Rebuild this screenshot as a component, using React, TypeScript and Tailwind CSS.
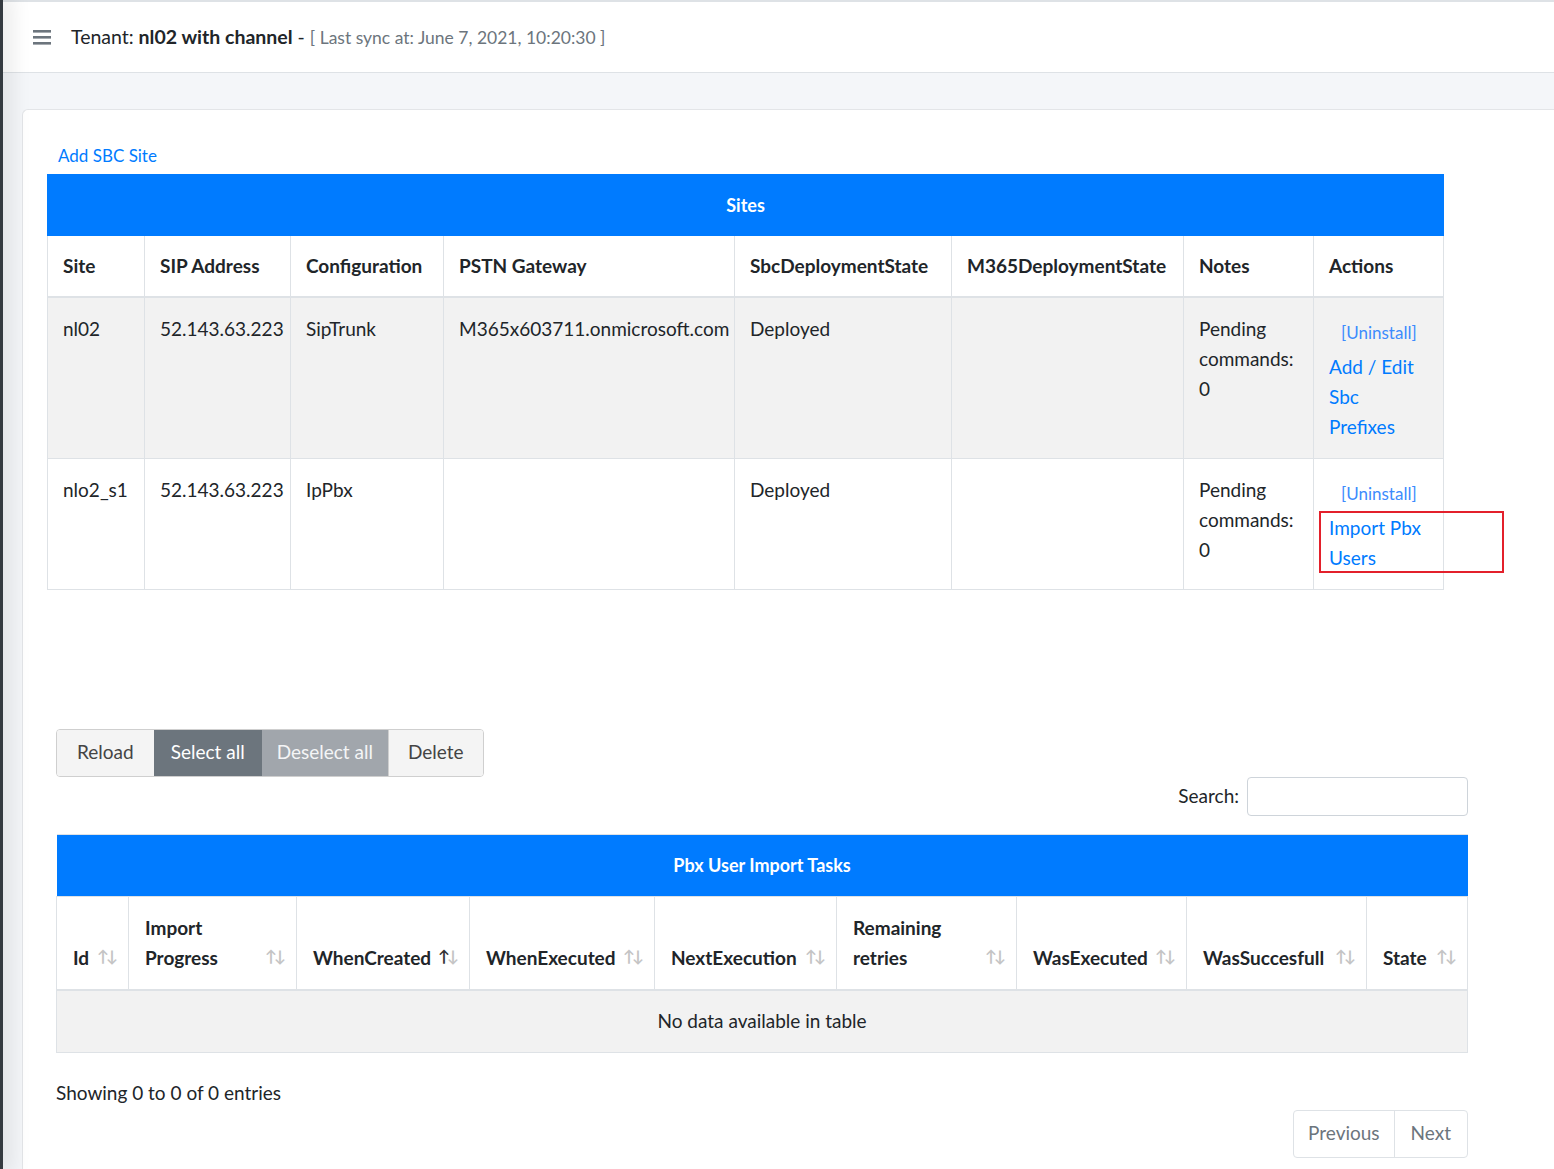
import React from 'react';

const font = { fontFamily: 'Lato, "Open Sans", sans-serif' };

const siteCols = [
    { label: 'Site', w: 97 },
    { label: 'SIP Address', w: 146 },
    { label: 'Configuration', w: 153 },
    { label: 'PSTN Gateway', w: 291 },
    { label: 'SbcDeploymentState', w: 217 },
    { label: 'M365DeploymentState', w: 232 },
    { label: 'Notes', w: 130 },
    { label: 'Actions', w: 130 },
];

const taskCols = [
    { label: 'Id', w: 72, wrap: false },
    { label: 'Import Progress', w: 168, wrap: true },
    { label: 'WhenCreated', w: 173, wrap: false, active: true },
    { label: 'WhenExecuted', w: 185, wrap: false },
    { label: 'NextExecution', w: 182, wrap: false },
    { label: 'Remaining retries', w: 180, wrap: true },
    { label: 'WasExecuted', w: 170, wrap: false },
    { label: 'WasSuccesfull', w: 180, wrap: false },
    { label: 'State', w: 101, wrap: false },
];

const SortArrows: React.FC<{ active?: boolean }> = ({ active }) => (
    <span className="absolute right-[10px] bottom-[25px] flex text-[16px] leading-none font-bold">
        <span className={active ? 'text-[#333]' : 'text-[#c4c4c4]'}>↑</span>
        <span className="text-[#c4c4c4] -ml-[3px]">↓</span>
    </span>
);

const Uninstall = () => (
    <div className="h-[38px] flex items-center pl-[12px]">
        <a className="text-[17px] text-[#3d8bfd] cursor-pointer">[Uninstall]</a>
    </div>
);

const td = 'px-[15px] py-[16px] border border-[#dee2e6]';

export default function App() {
    return (
        <div className="flex min-h-[1169px] bg-white text-[#212529]" style={font}>
            <div className="w-[3px] bg-[#343a40] shadow-[0_0_22px_6px_rgba(0,0,0,0.12)] z-10" />

            <div className="flex-1 flex flex-col min-w-0">
                <header className="h-[73px] border-t-2 border-b border-[#dee2e6] bg-white flex items-center pl-[30px]">
                    <svg width="18" height="16" viewBox="0 0 18 16" className="mr-[20px]">
                        <rect x="0" y="1" width="18" height="2.6" fill="#6c757d" />
                        <rect x="0" y="7" width="18" height="2.6" fill="#6c757d" />
                        <rect x="0" y="13" width="18" height="2.6" fill="#6c757d" />
                    </svg>
                    <span className="text-[19.5px]">
                        Tenant: <b className="font-bold">nl02 with channel</b> -{' '}
                        <span className="text-[17.5px] text-[#6c757d]">[ Last sync at: June 7, 2021, 10:20:30 ]</span>
                    </span>
                </header>

                <main className="flex-1 bg-[#f4f6f9] pt-[36px] pl-[19px]">
                    <div className="bg-white border-t border-l border-[#e3e5e8] rounded-tl-[6px] h-full pl-[24px] pt-[34px] pb-[10px]">
                        <a className="block text-[17px] text-[#007bff] ml-[11px] mb-[6px] leading-[24px]">Add SBC Site</a>

                        <table className="border-collapse text-[19px] w-[1396px] table-fixed">
                            <colgroup>
                                {siteCols.map(c => (
                                    <col key={c.label} style={{ width: c.w }} />
                                ))}
                            </colgroup>
                            <thead>
                                <tr>
                                    <th colSpan={8} className="bg-[#007bff] text-white font-bold text-[18px] h-[61px] border border-[#007bff]">
                                        Sites
                                    </th>
                                </tr>
                                <tr>
                                    {siteCols.map(c => (
                                        <th
                                            key={c.label}
                                            className="h-[61px] text-left font-bold px-[15px] border border-[#dee2e6] border-b-2 whitespace-nowrap"
                                        >
                                            {c.label}
                                        </th>
                                    ))}
                                </tr>
                            </thead>
                            <tbody className="leading-[30px]">
                                <tr className="bg-[#f2f2f2] align-top">
                                    <td className={td}>nl02</td>
                                    <td className={td}>52.143.63.223</td>
                                    <td className={td}>SipTrunk</td>
                                    <td className={`${td} whitespace-nowrap`}>M365x603711.onmicrosoft.com</td>
                                    <td className={td}>Deployed</td>
                                    <td className={td}></td>
                                    <td className={td}>Pending commands: 0</td>
                                    <td className={td}>
                                        <Uninstall />
                                        <a className="text-[#007bff] block">Add / Edit Sbc Prefixes</a>
                                    </td>
                                </tr>
                                <tr className="bg-white align-top">
                                    <td className={td}>nlo2_s1</td>
                                    <td className={td}>52.143.63.223</td>
                                    <td className={td}>IpPbx</td>
                                    <td className={td}></td>
                                    <td className={td}>Deployed</td>
                                    <td className={td}></td>
                                    <td className={td}>Pending commands: 0</td>
                                    <td className={td}>
                                        <Uninstall />
                                        <span className="relative block">
                                            <a className="text-[#007bff] block">Import Pbx Users</a>
                                            <span className="absolute -left-[10px] -top-[2px] w-[185px] h-[62px] border-2 border-[#e3202b]" />
                                        </span>
                                    </td>
                                </tr>
                            </tbody>
                        </table>

                        <section className="pl-[9px] pr-[63px] mt-[139px] w-[1484px]">
                            <div className="inline-flex text-[19px] h-[48px] rounded-[4px] overflow-hidden border border-[#cfcfcf]">
                                <button className="px-[20px] bg-[#f4f4f4] text-[#444]">Reload</button>
                                <button className="px-[17px] bg-[#6c757d] text-white">Select all</button>
                                <button className="px-[15px] bg-[#a1a6ac] text-[#f4f5f6]">Deselect all</button>
                                <button className="px-[19px] bg-[#f4f4f4] text-[#444] border-l border-[#cfcfcf]">Delete</button>
                            </div>

                            <div className="flex justify-end items-center gap-[8px]">
                                <label className="text-[19px]">Search:</label>
                                <input className="w-[221px] h-[39px] border border-[#ced4da] rounded-[4px] outline-none" />
                            </div>

                            <table className="border-collapse text-[19px] w-[1411px] table-fixed mt-[18px]">
                                <colgroup>
                                    {taskCols.map(c => (
                                        <col key={c.label} style={{ width: c.w }} />
                                    ))}
                                </colgroup>
                                <thead>
                                    <tr>
                                        <th colSpan={9} className="bg-[#007bff] text-white font-bold text-[18px] h-[62px] border-t border-[#dee2e6]">
                                            Pbx User Import Tasks
                                        </th>
                                    </tr>
                                    <tr>
                                        {taskCols.map(c => (
                                            <th
                                                key={c.label}
                                                className={`relative h-[94px] align-bottom text-left font-bold pl-[16px] pr-[30px] pb-[16px] leading-[30px] border border-[#dee2e6] border-b-2 ${c.wrap ? '' : 'whitespace-nowrap'}`}
                                            >
                                                {c.label}
                                                <SortArrows active={c.active} />
                                            </th>
                                        ))}
                                    </tr>
                                </thead>
                                <tbody>
                                    <tr className="bg-[#f2f2f2]">
                                        <td colSpan={9} className="h-[62px] text-center border border-[#dee2e6]">
                                            No data available in table
                                        </td>
                                    </tr>
                                </tbody>
                            </table>

                            <div className="text-[19px] mt-[25px] leading-[30px]">Showing 0 to 0 of 0 entries</div>

                            <div className="flex justify-end mt-[2px]">
                                <div className="flex text-[19px] text-[#6c757d] border border-[#dee2e6] rounded-[4px] h-[48px]">
                                    <span className="px-[14px] flex items-center border-r border-[#dee2e6]">Previous</span>
                                    <span className="px-[16px] flex items-center">Next</span>
                                </div>
                            </div>
                        </section>
                    </div>
                </main>
            </div>
        </div>
    );
}
